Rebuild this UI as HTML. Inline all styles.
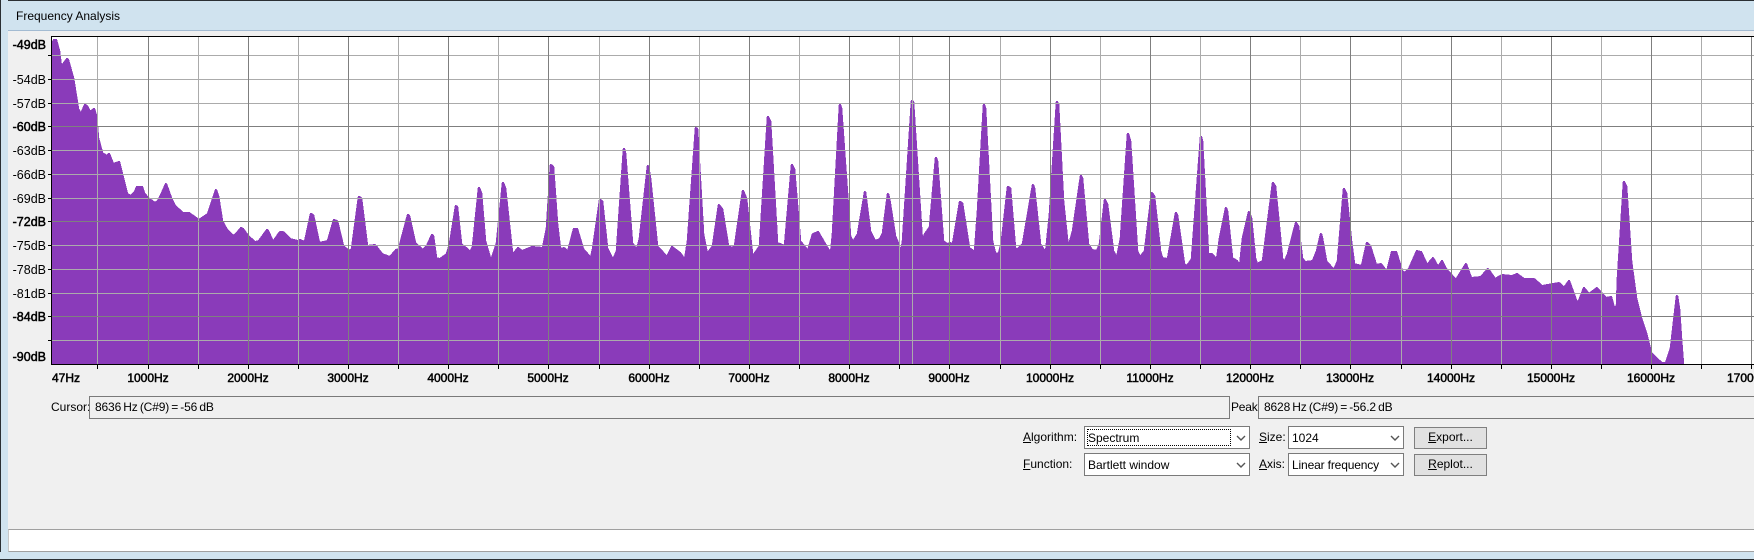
<!DOCTYPE html>
<html><head><meta charset="utf-8"><title>Frequency Analysis</title>
<style>
html,body{margin:0;padding:0;background:#f0f0f0}
#w{position:relative;width:1754px;height:560px;overflow:hidden;background:#f0f0f0;font:12px "Liberation Sans",sans-serif;color:#000}
.a{position:absolute;box-sizing:border-box}
.t{position:absolute;white-space:nowrap;line-height:14px}
.v{letter-spacing:-.15px;word-spacing:-1px}
.box{border:1px solid #7a7a7a;background:#f0f0f0}
.sel{border:1px solid #7a7a7a;background:#fff}
.btn{border:1px solid #7f7f7f;background:#e1e1e1;text-align:center;line-height:19px}
svg{position:absolute;left:0;top:0}
</style></head><body><div id="w">
<div class="a" style="left:0;top:0;width:1754px;height:30px;background:#d0e3ef"></div>
<div class="a" style="left:0;top:0;width:1754px;height:1px;background:#2a2f33"></div>
<div class="a" style="left:0;top:0;width:8px;height:560px;background:#d0e3ef"></div>
<div class="a" style="left:0;top:0;width:1px;height:560px;background:#2a2f33"></div>
<div class="a" style="left:8px;top:30px;width:1746px;height:1px;background:#a3bbd2"></div>
<div class="a" style="left:0;top:552px;width:1754px;height:8px;background:#d0e3ef"></div>
<div class="a" style="left:0;top:559px;width:1754px;height:1px;background:#2a2f33"></div>
<div class="t" style="left:16px;top:9px">Frequency Analysis</div>

<svg width="1754" height="400" viewBox="0 0 1754 400" xmlns="http://www.w3.org/2000/svg" font-family="Liberation Sans, sans-serif" font-size="12" fill="#000">
<defs><clipPath id="pc"><rect x="52" y="37" width="1632" height="327"/></clipPath></defs>
<rect x="52" y="37" width="1702" height="327" fill="#fff"/>
<g clip-path="url(#pc)">
<polygon transform="translate(0,1.3)" shape-rendering="crispEdges" fill="#8a3bba" stroke="#8a3bba" stroke-width="2.6" stroke-linejoin="round" points="52,364 52,43 54,39 56,39 59,50 61,66 67,58 68,59 73,77 78,108 81,113 85,104 87,105 90,111 94,108 96,115 98,137 102,152 107,155 109,153 113,163 119,161 122,173 126,189 127,193 131,195 135,191 137,186 142,186 144,192 148,197 155,202 158,200 162,192 166,183 171,197 175,205 183,212 189,212 199,219 208,213 213,198 216,189 218,195 222,220 227,229 233,235 236,233 241,227 243,228 248,235 255,241 259,240 267,229 268,230 273,241 280,231 283,231 290,238 298,240 300,239 305,241 311,213 313,214 319,242 328,240 334,219 337,220 343,245 349,250 352,248 359,196 361,197 367,245 375,244 382,253 390,256 396,249 399,248 408,214 409,215 415,242 423,249 427,245 432,234 433,235 436,257 440,258 447,253 450,243 456,205 457,206 461,243 466,247 470,251 473,246 479,187 481,192 485,240 490,257 492,257 497,242 503,182 505,187 512,252 514,252 518,247 522,250 532,246 543,247 547,227 551,164 553,166 557,223 560,248 564,247 568,251 574,228 577,228 583,248 591,257 593,248 600,199 602,200 607,247 613,259 617,250 624,148 625,152 632,242 637,249 640,237 648,165 650,177 657,245 667,256 672,246 680,252 685,259 688,240 696,127 697,128 703,233 707,253 713,245 719,204 722,208 728,245 732,247 735,245 743,190 746,197 752,253 753,255 760,245 768,116 770,120 777,242 780,243 785,245 792,164 794,168 800,240 808,250 813,233 818,231 825,243 831,253 833,233 840,104 841,107 850,235 853,241 858,233 865,191 870,230 875,240 880,238 883,232 888,193 889,197 895,235 898,242 901,252 903,240 912,100 913,101 922,242 925,233 930,226 936,157 937,160 943,240 947,243 950,242 953,243 960,201 962,202 969,247 975,251 978,210 984,104 985,107 992,240 995,252 999,253 1002,240 1008,186 1010,187 1015,247 1017,249 1023,243 1033,184 1034,187 1040,243 1046,252 1050,213 1057,101 1058,103 1063,200 1068,248 1073,230 1081,175 1082,177 1088,243 1092,249 1097,250 1100,243 1105,199 1107,203 1113,250 1117,257 1121,237 1128,133 1130,140 1137,250 1140,256 1145,250 1152,192 1154,195 1160,250 1162,257 1168,258 1176,212 1177,214 1184,263 1187,265 1192,258 1201,136 1202,140 1208,253 1212,253 1217,259 1220,237 1226,207 1227,210 1232,257 1237,260 1240,266 1243,237 1249,211 1251,217 1255,257 1257,263 1263,260 1273,182 1275,185 1282,257 1284,262 1288,253 1296,222 1298,225 1302,257 1305,261 1313,260 1317,250 1321,233 1322,237 1326,260 1334,269 1338,260 1344,188 1346,192 1351,240 1354,263 1362,265 1367,242 1370,245 1376,264 1381,263 1387,271 1392,251 1396,251 1402,270 1405,272 1409,268 1417,250 1421,251 1427,264 1433,257 1438,266 1442,260 1446,268 1456,279 1466,263 1471,277 1481,276 1488,268 1495,278 1502,274 1512,275 1517,273 1524,278 1534,278 1542,285 1559,282 1564,287 1569,280 1577,302 1579,300 1584,287 1589,293 1597,287 1606,297 1611,296 1614,307 1617,305 1618,277 1624,181 1626,185 1631,260 1636,297 1641,317 1646,332 1651,352 1657,358 1662,362 1666,362 1671,347 1677,295 1679,308 1681,338 1683,364"/>
</g>
<g shape-rendering="crispEdges">
<g fill="#ababab">
<rect x="52" y="55" width="1702" height="1"/><rect x="52" y="79" width="1702" height="1"/><rect x="52" y="103" width="1702" height="1"/><rect x="52" y="150" width="1702" height="1"/><rect x="52" y="174" width="1702" height="1"/><rect x="52" y="198" width="1702" height="1"/><rect x="52" y="245" width="1702" height="1"/><rect x="52" y="269" width="1702" height="1"/><rect x="52" y="293" width="1702" height="1"/><rect x="52" y="340" width="1702" height="1"/>
<rect x="97" y="37" width="1" height="327"/><rect x="198" y="37" width="1" height="327"/><rect x="298" y="37" width="1" height="327"/><rect x="398" y="37" width="1" height="327"/><rect x="498" y="37" width="1" height="327"/><rect x="599" y="37" width="1" height="327"/><rect x="699" y="37" width="1" height="327"/><rect x="799" y="37" width="1" height="327"/><rect x="899" y="37" width="1" height="327"/><rect x="912" y="37" width="1" height="327"/><rect x="1000" y="37" width="1" height="327"/><rect x="1100" y="37" width="1" height="327"/><rect x="1200" y="37" width="1" height="327"/><rect x="1300" y="37" width="1" height="327"/><rect x="1401" y="37" width="1" height="327"/><rect x="1501" y="37" width="1" height="327"/><rect x="1601" y="37" width="1" height="327"/><rect x="1701" y="37" width="1" height="327"/>
</g>
<g fill="#7f7f7f">
<rect x="52" y="126" width="1702" height="1"/><rect x="52" y="221" width="1702" height="1"/><rect x="52" y="316" width="1702" height="1"/>
<rect x="148" y="37" width="1" height="327"/><rect x="248" y="37" width="1" height="327"/><rect x="348" y="37" width="1" height="327"/><rect x="448" y="37" width="1" height="327"/><rect x="548" y="37" width="1" height="327"/><rect x="649" y="37" width="1" height="327"/><rect x="749" y="37" width="1" height="327"/><rect x="849" y="37" width="1" height="327"/><rect x="949" y="37" width="1" height="327"/><rect x="1050" y="37" width="1" height="327"/><rect x="1150" y="37" width="1" height="327"/><rect x="1250" y="37" width="1" height="327"/><rect x="1350" y="37" width="1" height="327"/><rect x="1451" y="37" width="1" height="327"/><rect x="1551" y="37" width="1" height="327"/><rect x="1651" y="37" width="1" height="327"/><rect x="1751" y="37" width="1" height="327"/>
</g>
<g fill="#000">
<rect x="51" y="36" width="1703" height="1"/><rect x="51" y="36" width="1" height="329"/><rect x="51" y="364" width="1703" height="1"/>
<rect x="48" y="55" width="3" height="1"/><rect x="48" y="79" width="3" height="1"/><rect x="48" y="103" width="3" height="1"/><rect x="48" y="126" width="3" height="1"/><rect x="48" y="150" width="3" height="1"/><rect x="48" y="174" width="3" height="1"/><rect x="48" y="198" width="3" height="1"/><rect x="48" y="221" width="3" height="1"/><rect x="48" y="245" width="3" height="1"/><rect x="48" y="269" width="3" height="1"/><rect x="48" y="293" width="3" height="1"/><rect x="48" y="316" width="3" height="1"/><rect x="48" y="340" width="3" height="1"/>
<rect x="97" y="365" width="1" height="4"/><rect x="148" y="365" width="1" height="4"/><rect x="198" y="365" width="1" height="4"/><rect x="248" y="365" width="1" height="4"/><rect x="298" y="365" width="1" height="4"/><rect x="348" y="365" width="1" height="4"/><rect x="398" y="365" width="1" height="4"/><rect x="448" y="365" width="1" height="4"/><rect x="498" y="365" width="1" height="4"/><rect x="548" y="365" width="1" height="4"/><rect x="599" y="365" width="1" height="4"/><rect x="649" y="365" width="1" height="4"/><rect x="699" y="365" width="1" height="4"/><rect x="749" y="365" width="1" height="4"/><rect x="799" y="365" width="1" height="4"/><rect x="849" y="365" width="1" height="4"/><rect x="899" y="365" width="1" height="4"/><rect x="949" y="365" width="1" height="4"/><rect x="1000" y="365" width="1" height="4"/><rect x="1050" y="365" width="1" height="4"/><rect x="1100" y="365" width="1" height="4"/><rect x="1150" y="365" width="1" height="4"/><rect x="1200" y="365" width="1" height="4"/><rect x="1250" y="365" width="1" height="4"/><rect x="1300" y="365" width="1" height="4"/><rect x="1350" y="365" width="1" height="4"/><rect x="1401" y="365" width="1" height="4"/><rect x="1451" y="365" width="1" height="4"/><rect x="1501" y="365" width="1" height="4"/><rect x="1551" y="365" width="1" height="4"/><rect x="1601" y="365" width="1" height="4"/><rect x="1651" y="365" width="1" height="4"/><rect x="1701" y="365" width="1" height="4"/><rect x="1751" y="365" width="1" height="4"/>
</g>
</g>
<g text-anchor="end" font-size="12.5">
<text x="46" y="49" stroke="#000" stroke-width=".5">-49dB</text>
<text x="46" y="84">-54dB</text><text x="46" y="108">-57dB</text>
<text x="46" y="131" stroke="#000" stroke-width=".5">-60dB</text>
<text x="46" y="155">-63dB</text><text x="46" y="179">-66dB</text><text x="46" y="203">-69dB</text>
<text x="46" y="226" stroke="#000" stroke-width=".5">-72dB</text>
<text x="46" y="250">-75dB</text><text x="46" y="274">-78dB</text><text x="46" y="298">-81dB</text>
<text x="46" y="321" stroke="#000" stroke-width=".5">-84dB</text>
<text x="46" y="361" stroke="#000" stroke-width=".5">-90dB</text>
</g>
<g text-anchor="middle" stroke="#000" stroke-width=".5">
<text x="52" y="382" text-anchor="start">47Hz</text>
<text x="148" y="382">1000Hz</text><text x="248" y="382">2000Hz</text><text x="348" y="382">3000Hz</text><text x="448" y="382">4000Hz</text><text x="548" y="382">5000Hz</text><text x="649" y="382">6000Hz</text><text x="749" y="382">7000Hz</text><text x="849" y="382">8000Hz</text><text x="949" y="382">9000Hz</text><text x="1050" y="382">10000Hz</text><text x="1150" y="382">11000Hz</text><text x="1250" y="382">12000Hz</text><text x="1350" y="382">13000Hz</text><text x="1451" y="382">14000Hz</text><text x="1551" y="382">15000Hz</text><text x="1651" y="382">16000Hz</text><text x="1751" y="382">17000Hz</text>
</g>
</svg>

<div class="t" style="left:51px;top:400px">Cursor:</div>
<div class="a box" style="left:89px;top:396px;width:1141px;height:23px"></div>
<div class="t v" style="left:95px;top:400px">8636 Hz (C#9) = -56 dB</div>
<div class="t" style="left:1231px;top:400px;letter-spacing:-.2px">Peak:</div>
<div class="a box" style="left:1258px;top:396px;width:520px;height:23px"></div>
<div class="t v" style="left:1264px;top:400px">8628 Hz (C#9) = -56.2 dB</div>

<div class="t" style="left:1023px;top:430px"><u>A</u>lgorithm:</div>
<div class="t" style="left:1023px;top:457px"><u>F</u>unction:</div>
<div class="t" style="left:1259px;top:430px"><u>S</u>ize:</div>
<div class="t" style="left:1259px;top:457px"><u>A</u>xis:</div>

<div class="a sel" style="left:1084px;top:426px;width:166px;height:23px"></div>
<div class="a" style="left:1087px;top:429px;width:144px;height:17px;border:1px dotted #000"></div>
<div class="t" style="left:1088px;top:431px">Spectrum</div>
<div class="a sel" style="left:1084px;top:453px;width:166px;height:23px"></div>
<div class="t" style="left:1088px;top:458px">Bartlett window</div>
<div class="a sel" style="left:1288px;top:426px;width:116px;height:23px"></div>
<div class="t" style="left:1292px;top:431px">1024</div>
<div class="a sel" style="left:1288px;top:453px;width:116px;height:23px"></div>
<div class="t" style="left:1292px;top:458px;letter-spacing:-.15px">Linear frequency</div>
<svg width="1754" height="560" style="pointer-events:none" fill="none" stroke="#555" stroke-width="1.4">
<path d="M1237 436l4 4 4-4M1237 463l4 4 4-4M1391 436l4 4 4-4M1391 463l4 4 4-4"/>
</svg>
<div class="a btn" style="left:1414px;top:427px;width:73px;height:22px"><u>E</u>xport...</div>
<div class="a btn" style="left:1414px;top:454px;width:73px;height:22px"><u>R</u>eplot...</div>

<div class="a" style="left:8px;top:529px;width:1746px;height:23px;background:#fff;border-top:1px solid #a0a0a0;border-bottom:1px solid #a0a0a0;border-left:1px solid #c8c8c8"></div>
</div></body></html>
